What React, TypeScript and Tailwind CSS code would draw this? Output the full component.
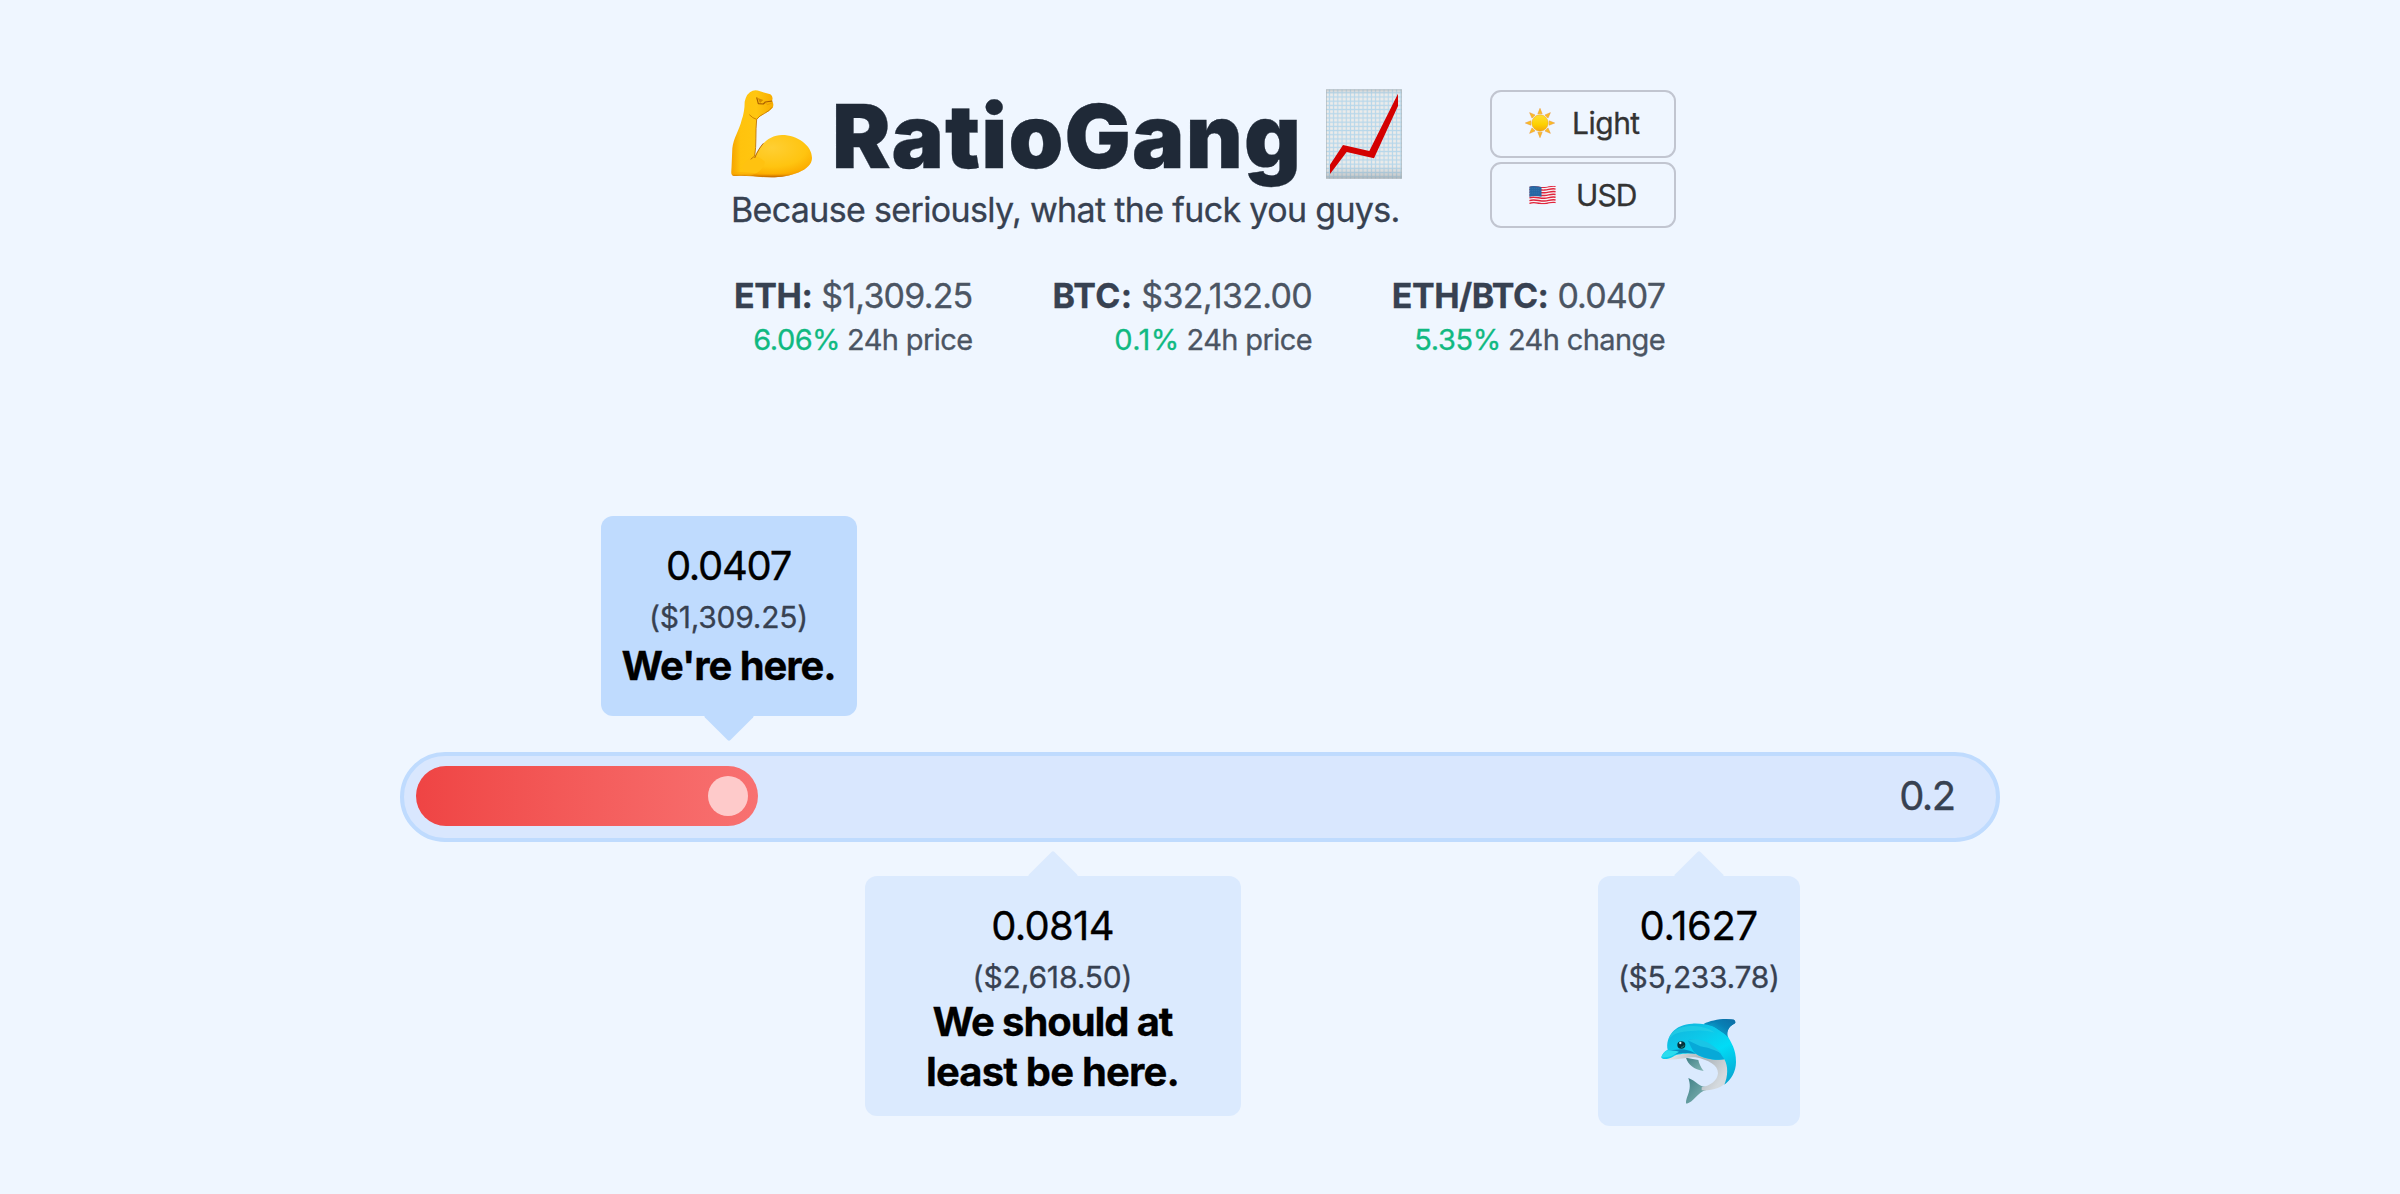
import type { ReactNode } from "react";

function FlexedArm() {
  return (
    <svg className="mt-[2px] h-[88px] w-[81px] shrink-0" viewBox="63 60 243 264" aria-hidden="true">
      <defs>
        <linearGradient id="armFore" x1="0" x2="1" y1="0" y2="0">
          <stop offset="0" stopColor="#f5a300" />
          <stop offset="0.22" stopColor="#ffc30d" />
          <stop offset="0.6" stopColor="#ffc610" />
          <stop offset="1" stopColor="#f7ac00" />
        </linearGradient>
        <radialGradient id="armMuscle" cx="0.48" cy="0.3" r="0.75">
          <stop offset="0" stopColor="#ffcf33" />
          <stop offset="0.6" stopColor="#ffc410" />
          <stop offset="0.85" stopColor="#fcae00" />
          <stop offset="1" stopColor="#d97b00" />
        </radialGradient>
        <linearGradient id="armShade" x1="0" x2="0" y1="0" y2="1">
          <stop offset="0" stopColor="#ffc60d" stopOpacity="0" />
          <stop offset="0.8" stopColor="#f9a500" stopOpacity="0.5" />
          <stop offset="1" stopColor="#b85c00" />
        </linearGradient>
      </defs>
      <path
        d="M132 264C150 222 178 196 216 195C262 195 306 226 306 264C306 302 240 322 182 322C142 322 104 314 76 318L100 250Z"
        fill="url(#armMuscle)"
      />
      <path
        d="M104 95Q110 68 128 62Q138 58 150 64L181 73Q191 80 186 92Q193 102 188 113Q180 123 164 130Q147 138 140 150C136 185 140 220 134 262C150 285 140 312 120 318C100 314 90 316 76 318Q64 320 64 306L67 235C70 205 88 180 95 150Q104 125 104 95Z"
        fill="url(#armFore)"
      />
      <path d="M120 260C140 255 150 262 165 275C160 300 140 316 110 316L95 290Z" fill="#ffc210" />
      <path d="M70 275Q64 295 64 308Q64 319 78 318C110 314 145 321 185 322C240 322 298 303 305 270C290 300 230 312 180 311C140 311 110 305 70 305Z" fill="url(#armShade)" />
      <path d="M134 264C142 245 151 230 160 220" fill="none" stroke="#a65300" strokeWidth="2.5" />
      <path d="M140 148C136 185 140 225 134 258L122 268" fill="none" stroke="#b86c00" strokeWidth="2.5" />
      <path d="M186 112Q179 122 164 130Q148 137 140 148Q128 145 118 134" fill="none" stroke="#cf8200" strokeWidth="3" />
      <path d="M140 82L145 101L160 102L166 96L187 93" fill="none" stroke="#a85c00" strokeWidth="3.5" strokeLinejoin="round" />
      <path d="M143 84L160 90L150 99Z" fill="#d48a00" />
      <path d="M166 98L172 104L186 99" fill="none" stroke="#df9800" strokeWidth="2" />
    </svg>
  );
}

function RisingChart() {
  return (
    <svg className="mt-[1px] h-[90px] w-[76px] shrink-0" viewBox="678 57 228 270" aria-hidden="true">
      <defs>
        <pattern id="chartGrid" x="682" y="62" width="12.6" height="12.6" patternUnits="userSpaceOnUse">
          <rect width="12.6" height="12.6" fill="#f1f0ee" />
          <path d="M0 6.3H12.6M6.3 0V12.6" stroke="#b8daee" strokeWidth="3.4" />
        </pattern>
        <linearGradient id="chartShade" x1="0" y1="0" x2="0" y2="1">
          <stop offset="0" stopColor="#8f969c" stopOpacity="0.3" />
          <stop offset="0.06" stopColor="#8f969c" stopOpacity="0.05" />
          <stop offset="0.85" stopColor="#8f969c" stopOpacity="0.05" />
          <stop offset="1" stopColor="#6f767c" stopOpacity="0.4" />
        </linearGradient>
      </defs>
      <rect x="678" y="58" width="228" height="268" fill="url(#chartGrid)" />
      <rect x="678" y="58" width="228" height="268" fill="url(#chartShade)" />
      <rect x="679.5" y="59.5" width="225" height="265" fill="none" stroke="#a9b2b8" strokeOpacity="0.6" strokeWidth="3" />
      <path d="M690 312V284L729 225L808 243L894 71V108L822 265L740 246Z" fill="#d40000" />
    </svg>
  );
}

function Sun() {
  return (
    <svg className="h-[30px] w-[30px] shrink-0" viewBox="195 115 90 90" aria-hidden="true">
      <defs>
        <linearGradient id="sunDisc" x1="0" y1="0" x2="0" y2="1">
          <stop offset="0" stopColor="#ffdf35" />
          <stop offset="0.6" stopColor="#fdd000" />
          <stop offset="1" stopColor="#f5a60c" />
        </linearGradient>
      </defs>
      {[0, 45, 90, 135, 180, 225, 270, 315].map((a) => (
        <path key={a} d="M240 116L246.500 132.500H233.500Z" transform={`rotate(${a} 240 160)`} fill="#fbbd22" stroke="#e8953a" strokeWidth="1.500" />
      ))}
      <circle cx="240" cy="160" r="24.500" fill="url(#sunDisc)" stroke="#eda323" strokeWidth="1.500" />
    </svg>
  );
}

function UsFlag() {
  return (
    <svg className="h-[20px] w-[27px] shrink-0" viewBox="208.500 343 81 60" aria-hidden="true">
      <defs>
        <clipPath id="flagShape">
          <path d="M209 348C225 342 240 350 255 349C268 348 276 343 289 346V398C276 395 268 400 255 401C240 402 225 395 209 401Z" />
        </clipPath>
      </defs>
      <g clipPath="url(#flagShape)">
        <rect x="208" y="340" width="82" height="65" fill="#f6f2f4" />
        {[0, 1, 2, 3, 4, 5, 6].map((i) => (
          <path
            key={i}
            d="M209 349C225 343 240 351 255 350C268 349 276 344 289 347"
            transform={`translate(0 ${i * 8.2})`}
            fill="none"
            stroke="#e0253d"
            strokeWidth="4.200"
          />
        ))}
        <path d="M209 340H246V378C233 377 222 374 209 379Z" fill="#2667a3" />
        <path d="M213 353H243M213 360H243M213 367H243" stroke="#5b93c5" strokeWidth="1.500" strokeDasharray="2 4" />
      </g>
    </svg>
  );
}

function Dolphin() {
  return (
    <svg className="mt-[16px] h-[85px] w-[75px]" viewBox="62 57 225 255" aria-hidden="true">
      <defs>
        <linearGradient id="dolphinBack" x1="0.1" y1="0" x2="0.8" y2="1">
          <stop offset="0" stopColor="#12b4dc" />
          <stop offset="0.35" stopColor="#0cc9ea" />
          <stop offset="0.6" stopColor="#00dcf6" />
          <stop offset="1" stopColor="#08a9d4" />
        </linearGradient>
        <linearGradient id="dolphinFin" x1="0" y1="1" x2="1" y2="0">
          <stop offset="0" stopColor="#0cbce0" />
          <stop offset="0.6" stopColor="#087fb4" />
          <stop offset="1" stopColor="#0d6da5" />
        </linearGradient>
        <linearGradient id="dolphinBelly" x1="0" y1="0" x2="1" y2="0.4">
          <stop offset="0" stopColor="#f4f6f7" />
          <stop offset="0.6" stopColor="#a9b2b8" />
          <stop offset="1" stopColor="#d5dade" />
        </linearGradient>
        <linearGradient id="dolphinTail" x1="0" y1="0" x2="1" y2="1">
          <stop offset="0" stopColor="#3f7f85" />
          <stop offset="1" stopColor="#86b8b7" />
        </linearGradient>
      </defs>
      <path d="M137 173C143 193 160 208 190 213C180 200 176 190 174 180Z" fill="url(#dolphinTail)" />
      <path d="M196 260C178 262 168 243 144 234C150 252 150 266 143 284C138 296 135 309 139 311C158 308 172 276 198 270Z" fill="url(#dolphinTail)" />
      <path
        d="M190 72C212 61 246 54 281 59Q287 64 284 70C268 78 257 91 262 112L240 130Z"
        fill="url(#dolphinFin)"
      />
      <path
        d="M64 178C110 182 140 171 165 172C205 180 233 195 233 220C231 243 210 257 184 262L184 271C215 273 246 263 262 244C276 225 270 190 262 172L160 150L80 168Z"
        fill="url(#dolphinBelly)"
      />
      <path
        d="M63 173C66 160 76 152 82 150C74 110 104 72 156 71C182 70 198 74 218 78L262 108C272 128 287 146 287 186C287 215 272 240 252 254C263 230 264 198 252 178C225 182 190 176 166 161C140 160 112 161 98 170C86 177 68 180 63 173Z"
        fill="url(#dolphinBack)"
      />
      <path d="M205 75C222 64 250 56 281 59Q287 64 284 70C268 78 257 91 262 112C250 96 232 82 205 75Z" fill="url(#dolphinFin)" />
      <path d="M142 121C168 115 202 128 240 160L252 178C220 183 178 171 163 158C156 151 150 137 142 121Z" fill="#07a9d8" />
      <path d="M142 121C172 112 208 122 243 160C222 150 208 144 180 139Z" fill="#19c5e6" />
      <path d="M82 150C100 154 118 143 142 151C158 155 162 160 166 162C146 158 120 157 100 164C116 156 96 153 82 150Z" fill="#068fc1" />
      <path d="M63 172C67 160 76 152 84 151C96 153 106 152 116 155C104 164 84 174 63 172Z" fill="#2bdcee" />
      <path d="M84 120C92 90 122 76 160 78C190 80 210 88 224 98C200 92 186 90 166 92C132 94 100 94 84 120Z" fill="#2cd3e8" opacity="0.55" />
      <ellipse cx="123" cy="135" rx="12" ry="11" fill="#07313a" />
      <circle cx="120" cy="129" r="3.500" fill="#d8f6f8" />
      <path d="M122 142Q129 143 131 136" stroke="#1e9c8e" strokeWidth="2.500" fill="none" />
    </svg>
  );
}

type StatProps = {
  box: string;
  label: string;
  labelCls: string;
  value: string;
  valueCls: string;
  pct: string;
  pctCls: string;
  note: string;
};

function Stat({ box, label, labelCls, value, valueCls, pct, pctCls, note }: StatProps) {
  return (
    <div className={`flex shrink-0 flex-col items-end ${box}`}>
      <p className="flex gap-[9px] text-[34px] leading-[44px]">
        <span className={`font-bold text-[#374151] ${labelCls}`}>{label}</span>
        <span className={`text-[#4b5563] ${valueCls}`}>{value}</span>
      </p>
      <p className="flex gap-[7px] text-[29px] leading-[43px]">
        <span className={`text-[#10b981] ${pctCls}`}>{pct}</span>
        <span className="tracking-[-0.6px] text-[#4b5563]">{note}</span>
      </p>
    </div>
  );
}

type CalloutProps = {
  box: string;
  arrow: string;
  ratio: string;
  ratioCls: string;
  price: string;
  priceCls: string;
  children: ReactNode;
};

function Callout({ box, arrow, ratio, ratioCls, price, priceCls, children }: CalloutProps) {
  return (
    <div className={`relative flex shrink-0 flex-col items-center rounded-[12px] pt-[24px] text-center ${box}`}>
      <span className={`absolute left-1/2 h-[36px] w-[36px] -translate-x-1/2 rotate-45 rounded-[2px] ${arrow}`} />
      <p className={`relative text-[40px] leading-[51px] text-black ${ratioCls}`}>{ratio}</p>
      <p className={`relative text-[30px] leading-[52px] text-[#374151] ${priceCls}`}>{price}</p>
      {children}
    </div>
  );
}

export default function App() {
  return (
    <main className="flex h-[1194px] w-[2400px] flex-col overflow-hidden bg-[#eff6ff] pt-[88px] font-['Inter','Liberation_Sans',sans-serif] whitespace-nowrap [-webkit-text-stroke:0.3px]">
      <header className="ml-[731px] flex h-[186px]">
        <div className="flex w-[759px] flex-col">
          <div className="flex h-[98px]">
            <FlexedArm />
            <h1 className="ml-[20px] w-[494px] text-[88px] leading-[96px] font-black tracking-[1.1px] text-[#1f2937]">
              RatioGang
            </h1>
            <RisingChart />
          </div>
          <p className="text-[34px] leading-[48px] tracking-[-0.66px] text-[#374151]">
            Because seriously, what the fuck you guys.
          </p>
        </div>
        <div className="flex w-[186px] flex-col gap-[4px] pt-[2px] text-[30px] text-[#333]">
          <button className="flex h-[68px] items-center rounded-[11px] border-2 border-[#c1c5d0] pb-[2px] pl-[33px]">
            <Sun />
            <span className="ml-[17px] tracking-[-0.5px]">Light</span>
          </button>
          <button className="flex h-[66px] items-center rounded-[11px] border-2 border-[#c1c5d0] pl-[37px]">
            <UsFlag />
            <span className="ml-[20px] tracking-[-0.9px]">USD</span>
          </button>
        </div>
      </header>

      <section className="flex h-[242px]">
        <Stat box="w-[972.5px]" label="ETH:" labelCls="tracking-[-0.48px]" value="$1,309.25" valueCls="tracking-[-0.8px]" pct="6.06%" pctCls="tracking-[-0.55px]" note="24h price" />
        <Stat box="w-[339.5px]" label="BTC:" labelCls="tracking-[0.3px]" value="$32,132.00" valueCls="tracking-[-0.71px]" pct="0.1%" pctCls="tracking-[0.37px]" note="24h price" />
        <Stat box="w-[353px]" label="ETH/BTC:" labelCls="tracking-[-0.5px]" value="0.0407" valueCls="tracking-[-0.9px]" pct="5.35%" pctCls="tracking-[-0.37px]" note="24h change" />
      </section>

      <div className="flex h-[236px] pl-[600.5px]">
        <Callout box="h-[200px] w-[256px] bg-[#bfdbfe]" arrow="bottom-[-18px] bg-[#bfdbfe]" ratio="0.0407" ratioCls="tracking-[-1.3px]" price="($1,309.25)" priceCls="tracking-[-0.24px]">
          <p className="relative text-[40px] leading-[45px] font-bold tracking-[-1.1px] text-black">We're here.</p>
        </Callout>
      </div>

      <div className="ml-[400px] flex h-[90px] w-[1600px] shrink-0 items-center justify-between rounded-full border-4 border-[#bfdbfe] bg-[#d9e7fe] pr-[41.5px] pl-[12px]">
        <div className="mb-[2px] flex h-[60px] w-[342px] items-center justify-end rounded-full bg-linear-to-r from-[#ef4444] to-[#f87171] pr-[10px]">
          <span className="h-[40px] w-[40px] rounded-full bg-[#fecaca]" />
        </div>
        <span className="pb-[3px] text-[40px] tracking-[-1.6px] text-[#374151]">0.2</span>
      </div>

      <div className="flex items-start pt-[34px] pl-[864.5px]">
        <Callout box="h-[240px] w-[376px] bg-[#dbeafe]" arrow="top-[-18px] bg-[#dbeafe]" ratio="0.0814" ratioCls="tracking-[-0.7px]" price="($2,618.50)" priceCls="tracking-[-0.14px]">
          <p className="relative mt-[-6px] text-[40px] leading-[50px] font-bold text-black">
            <span className="tracking-[-1.1px]">We should at</span>
            <br />
            <span className="tracking-[-0.82px]">least be here.</span>
          </p>
        </Callout>
        <Callout box="ml-[357.5px] h-[250px] w-[201.5px] bg-[#dbeafe]" arrow="top-[-18px] bg-[#dbeafe]" ratio="0.1627" ratioCls="tracking-[-0.35px]" price="($5,233.78)" priceCls="tracking-[-0.33px]">
          <Dolphin />
        </Callout>
      </div>
    </main>
  );
}
